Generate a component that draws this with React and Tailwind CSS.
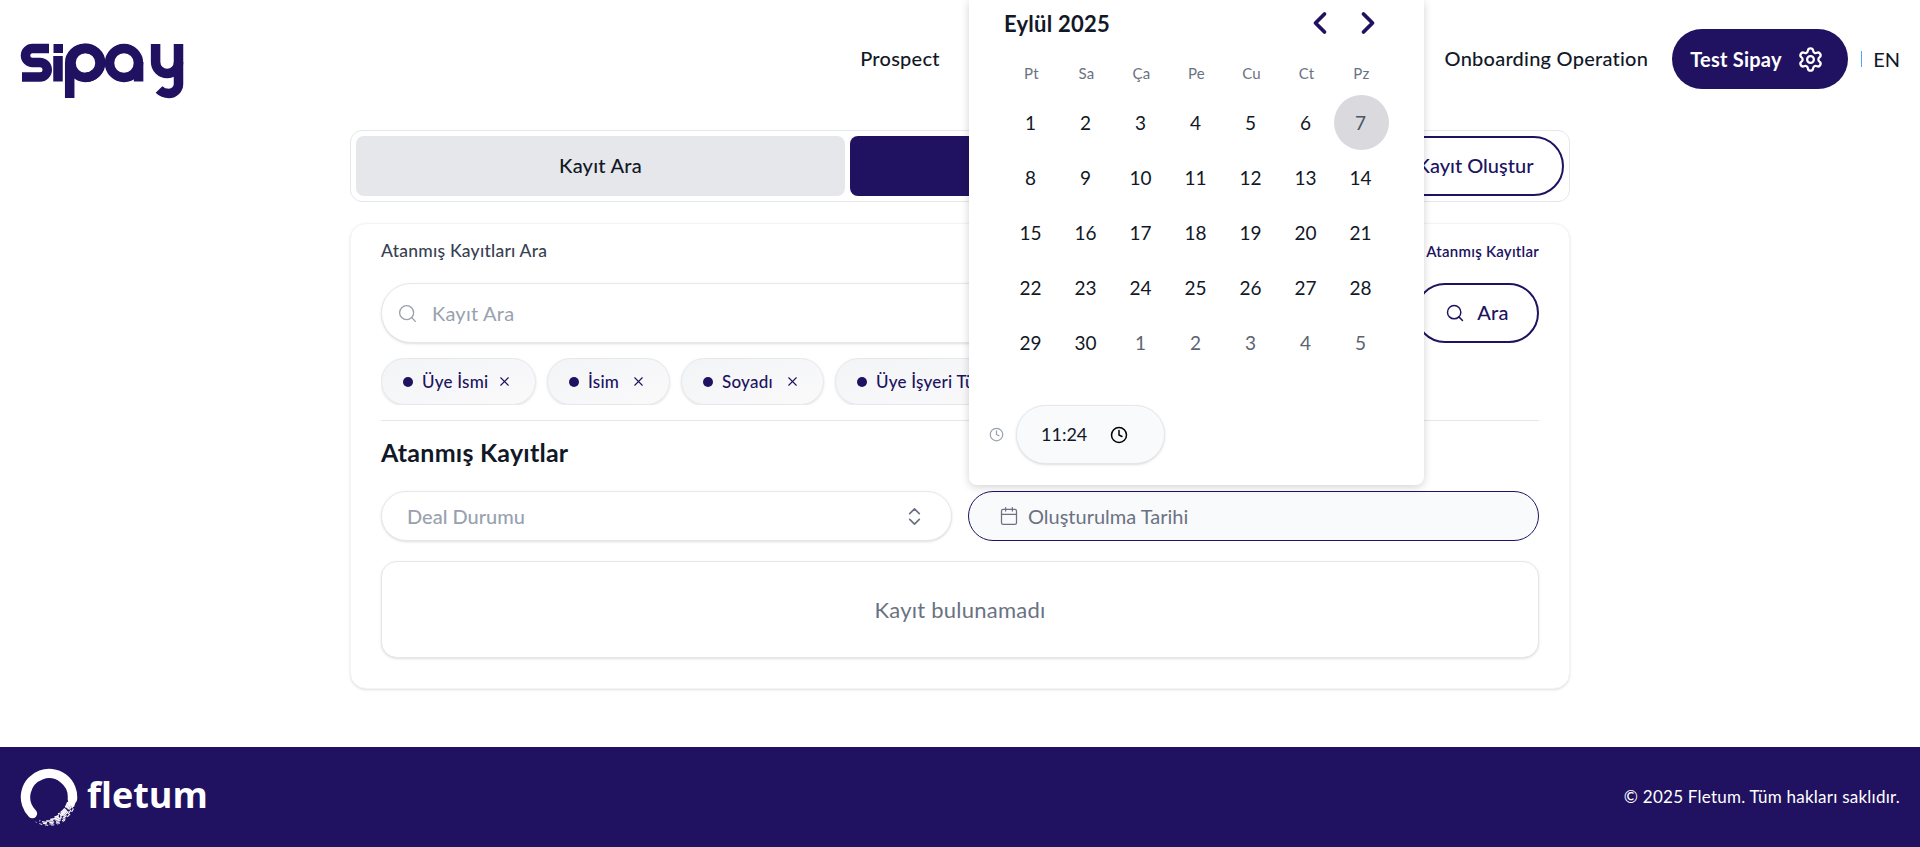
import React from "react";
import { Search, X, ChevronsUpDown, Calendar, Clock, Settings, ChevronLeft, ChevronRight } from "lucide-react";

const SipayLogo = () => (
  <svg width="164" height="56" viewBox="19 43 164 56" fill="none" stroke="#201260" strokeWidth="9.5" className="mt-[24px]">
    <path d="M48 48.5H31.5a7 7 0 0 0 0 14H39a7 7 0 0 1 0 14.5H21" />
    <path d="M52.5 48.5H62" strokeWidth="9" />
    <path d="M57 56V81.5" />
    <path d="M68.7 98V63a15.5 14.5 0 1 1 15.8 14.2" />
    <circle cx="84.5" cy="63" r="14.5" />
    <circle cx="123" cy="63" r="14.5" />
    <path d="M137.6 62V81.5" />
    <path d="M154.6 44V62a11.5 11.5 0 0 0 23 0" />
    <path d="M177.5 44V84a9.5 9.5 0 0 1-9.5 9.5c-4 0-7-1-10-4" />
  </svg>
);

const polar = (r, deg) => {
  const a = (deg * Math.PI) / 180;
  return `${(29 + r * Math.cos(a)).toFixed(2)} ${(30 + r * Math.sin(a)).toFixed(2)}`;
};
const arc = (r, from, to, large = 0) => `M${polar(r, from)}A${r} ${r} 0 ${large} 1 ${polar(r, to)}`;
const brush = [
  [19.5, 15, 62, 1.6, "6 1"],
  [21, 10, 75, 1.6, "8 1.5"],
  [22.5, 10, 88, 1.5, "9 1.5"],
  [24, 15, 100, 1.4, "7 2"],
  [25.5, 15, 112, 1.2, "5 2"],
  [27, 25, 105, 1.1, "4 2.5"],
  [28.3, 55, 118, 0.9, "3 3"],
];

const FletumRing = () => (
  <svg width="58" height="60" viewBox="0 0 58 60" fill="none" stroke="#ffffff" strokeLinecap="round">
    <path d={arc(23.5, 135, 5, 1)} strokeWidth="9.5" />
    <path d={arc(23.5, 5, 22)} strokeWidth="7" strokeLinecap="butt" />
    {brush.map(([r, a, b, w, d]) => (
      <path key={r} d={arc(r, a, b)} strokeWidth={w} strokeDasharray={d} strokeLinecap="butt" />
    ))}
  </svg>
);

const Chip = ({ label, w }) => (
  <div className={`flex items-center h-[47px] pl-[21px] pr-[23px] shrink-0 rounded-full border border-gray-200 bg-gradient-to-br from-[#f3f4f6] to-[#fafafb] shadow-sm text-[#201260] text-[17px] font-medium ${w}`}>
    <span className="w-[10px] h-[10px] rounded-full bg-[#201260] mr-[9px] shrink-0" />
    <span className="whitespace-nowrap">{label}</span>
    <X size={15} strokeWidth={1.75} className="ml-auto shrink-0" />
  </div>
);

const weekdays = ["Pt", "Sa", "Ça", "Pe", "Cu", "Ct", "Pz"];
const days = [
  ...Array.from({ length: 30 }, (_, i) => ({ n: i + 1, cur: true })),
  ...[1, 2, 3, 4, 5].map((n) => ({ n, cur: false })),
];

const Popover = () => (
  <div className="absolute left-[969px] top-0 w-[455px] h-[485px] bg-white rounded-b-lg shadow-[0_2px_8px_rgba(0,0,0,0.18)] px-[35px] z-20">
    <div className="flex items-center justify-between h-[46px] pr-[3px]">
      <span className="text-[22px] font-bold text-[#111827]">Eylül 2025</span>
      <div className="flex items-center gap-[12px] text-[#201260]">
        <ChevronLeft size={36} strokeWidth={2.5} />
        <ChevronRight size={36} strokeWidth={2.5} />
      </div>
    </div>
    <div className="grid grid-cols-[repeat(7,55px)] mt-[14px] h-[26px] items-center text-center text-[15px] text-gray-500">
      {weekdays.map((d) => (
        <span key={d}>{d}</span>
      ))}
    </div>
    <div className="grid grid-cols-[repeat(7,55px)] auto-rows-[55px] mt-[9px] h-[275px] text-[19px] text-center tracking-normal">
      {days.map((d, i) => (
        <div
          key={i}
          className={`flex items-center justify-center pt-[2px] pr-[2px] rounded-full ${
            d.n === 7 && d.cur ? "bg-[#d9d9de] text-gray-600" : d.cur ? "text-[#111827]" : "text-[#5b6470]"
          }`}
        >
          {d.n}
        </div>
      ))}
    </div>
    <div className="flex items-center mt-[35px] -ml-[15px]">
      <Clock size={15} className="text-gray-400" />
      <div className="ml-[12px] flex items-center w-[149px] h-[59px] pl-[24px] rounded-full bg-[#f9fafb] border border-gray-200 shadow-sm text-[18px] tracking-normal text-[#111827]">
        <span>11:24</span>
        <Clock size={18} strokeWidth={2} className="ml-[23px] text-black" />
      </div>
    </div>
  </div>
);

export default function App() {
  return (
    <div
      className="relative flex flex-col h-screen overflow-hidden bg-white tracking-[0.015em]"
      style={{ fontFamily: '"Lato", "Open Sans", sans-serif' }}
    >
      <header className="flex items-center h-[118px] pl-5 pr-5 shrink-0">
        <SipayLogo />
        <nav className="ml-auto flex items-center justify-between w-[788px] pb-[2px] text-[20px] font-medium text-[#111827]">
          <span>Prospect</span>
          <span>Onboarding Operation</span>
        </nav>
        <div className="ml-6 flex items-center justify-between w-[176px] h-[60px] pl-[18px] pr-[24px] rounded-full bg-[#201260] text-white text-[20px] font-bold">
          <span className="whitespace-nowrap">Test Sipay</span>
          <Settings size={27} strokeWidth={2} />
        </div>
        <span className="ml-[13px] w-px h-[16px] bg-blue-400" />
        <span className="ml-[11px] text-[20px] tracking-normal text-[#111827]">EN</span>
      </header>

      <main className="flex-1 w-[1220px] ml-[350px] mt-[12px]">
        <div className="flex items-center gap-[5px] h-[72px] px-[5px] rounded-xl border border-gray-200 bg-white">
          <div className="flex items-center justify-center w-[489px] h-[60px] pb-[2px] rounded-lg bg-gray-200 text-[20px] font-medium text-[#111827]">
            Kayıt Ara
          </div>
          <div className="w-[489px] h-[60px] rounded-lg bg-[#201260]" />
          <div className="flex items-center justify-center flex-1 h-[60px] pb-[2px] rounded-full border-2 border-[#201260] text-[20px] tracking-normal font-medium text-[#201260]">
            Yeni Kayıt Oluştur
          </div>
        </div>

        <section className="mt-[21px] h-[466px] px-[30px] pt-[17px] rounded-2xl border border-gray-100 shadow-sm bg-white">
          <div className="flex items-center justify-between h-[20px] font-medium">
            <span className="text-[17.5px] text-gray-700">Atanmış Kayıtları Ara</span>
            <span className="text-[15px] text-[#201260] font-semibold">Atanmış Kayıtlar</span>
          </div>
          <div className="flex items-center gap-3 mt-[22px]">
            <div className="flex items-center flex-1 h-[60px] pl-[15px] rounded-full border border-gray-200 shadow-sm bg-white">
              <Search size={21} strokeWidth={1.5} className="text-gray-400" />
              <span className="ml-[14px] text-[20px] text-gray-400">Kayıt Ara</span>
            </div>
            <div className="flex items-center justify-center w-[124px] h-[60px] gap-[12px] rounded-full border-2 border-[#201260] text-[#201260] text-[20px] font-medium">
              <Search size={20} strokeWidth={1.75} />
              <span className="pb-[2px]">Ara</span>
            </div>
          </div>
          <div className="flex items-center gap-[11px] mt-[15px] overflow-hidden">
            <Chip label="Üye İsmi" w="w-[155px]" />
            <Chip label="İsim" w="w-[123px]" />
            <Chip label="Soyadı" w="w-[143px]" />
            <Chip label="Üye İşyeri Türü" w="w-[210px]" />
          </div>
          <div className="mt-[15px] h-px bg-gray-200" />
          <h2 className="mt-[15px] h-[32px] leading-[32px] text-[25px] font-bold text-[#111827]">Atanmış Kayıtlar</h2>
          <div className="grid grid-cols-2 gap-4 mt-[23px]">
            <div className="flex items-center justify-between h-[50px] pl-[25px] pr-[25px] rounded-full border border-gray-200 shadow-sm bg-white">
              <span className="text-[20px] tracking-normal font-medium text-gray-400">Deal Durumu</span>
              <ChevronsUpDown size={23} strokeWidth={1.75} className="text-gray-500" />
            </div>
            <div className="flex items-center h-[50px] pl-[30px] rounded-full border border-[#201260] bg-[#f9fafb]">
              <Calendar size={20} strokeWidth={1.5} className="text-gray-500" />
              <span className="ml-[9px] text-[20px] tracking-normal text-gray-500">Oluşturulma Tarihi</span>
            </div>
          </div>
          <div className="flex items-center justify-center h-[97px] mt-[20px] rounded-2xl border border-gray-200 shadow-sm bg-white text-[22px] text-gray-500">
            Kayıt bulunamadı
          </div>
        </section>
      </main>

      <footer className="flex items-center justify-between h-[100px] shrink-0 pl-5 pr-5 bg-[#201260] text-white">
        <div className="flex items-center">
          <FletumRing />
          <span className="ml-[9px] mb-[4px] text-[36px] font-bold leading-none tracking-normal" style={{ fontFamily: '"Open Sans", sans-serif' }}>
            fletum
          </span>
        </div>
        <span className="text-[17px]">© 2025 Fletum. Tüm hakları saklıdır.</span>
      </footer>

      <Popover />
    </div>
  );
}
